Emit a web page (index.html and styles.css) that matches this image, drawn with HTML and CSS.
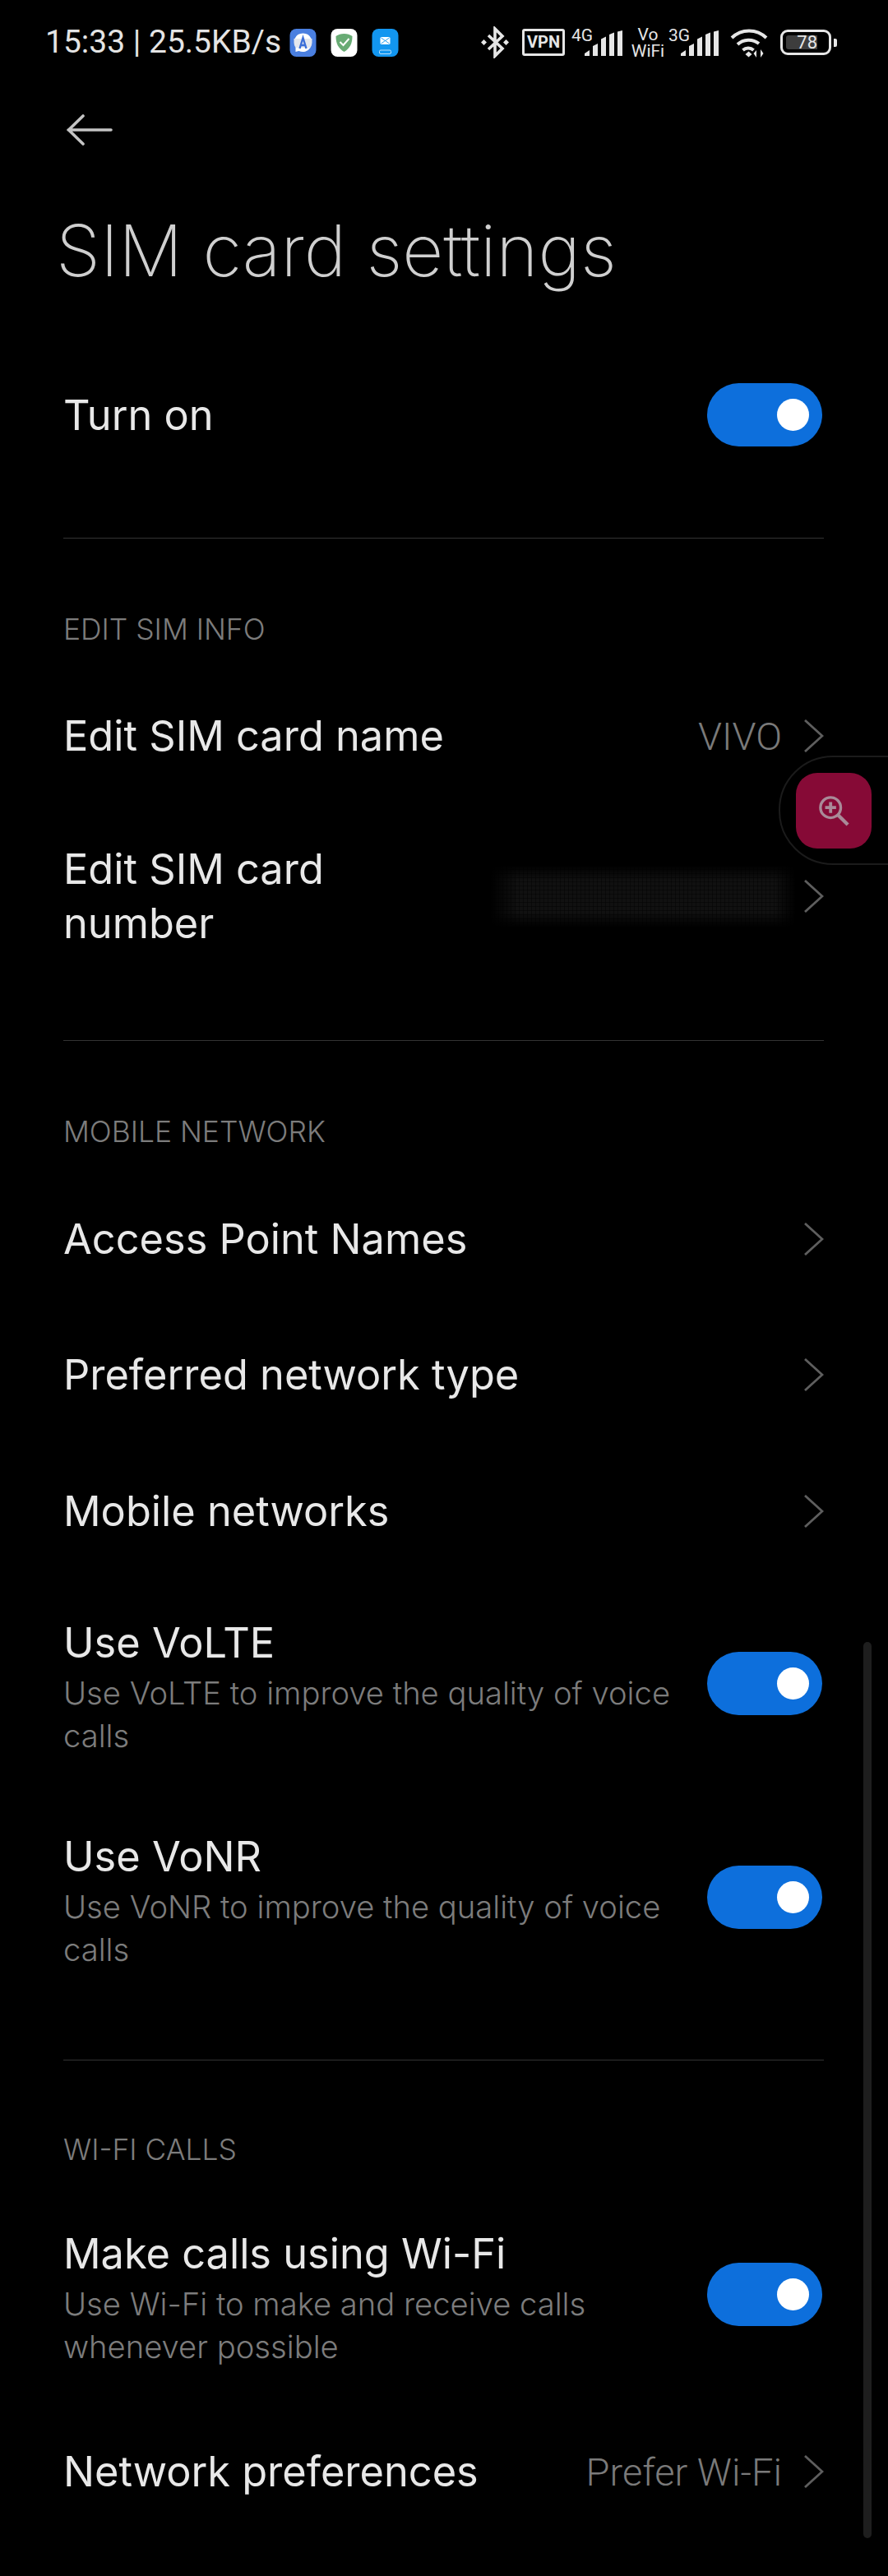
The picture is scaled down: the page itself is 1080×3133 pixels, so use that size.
FILE: index.html
```html
<!DOCTYPE html>
<html lang="en">
<head>
<meta charset="utf-8">
<title>SIM card settings</title>
<link rel="stylesheet" href="styles.css">
</head>
<body>
<div class="screen">
  <header class="status">
    <div class="status-left">
      <span class="clock">15:33 | 25.5KB/s</span>
      <span class="app-icons">
        <svg class="app" viewBox="0 0 32 34"><rect width="32" height="34" rx="8" fill="#4a7fe0"/><path d="M6 12a11 11 0 0 1 20 0z" fill="#fff"/><path d="M5 12h22v5a11 11 0 0 1-2 6H7a11 11 0 0 1-2-6z" fill="#e4e7ee"/><path d="M7 23h18a11 11 0 0 1-14 4l-4 1z" fill="#fff"/><path d="M12 24l4-13 4 13M13.5 20h5" stroke="#3c6fd8" stroke-width="2.4" fill="none"/></svg>
        <svg class="app" viewBox="0 0 32 34"><rect width="32" height="34" rx="8" fill="#fff"/><path d="M16 6c4 0 7 1 10 3 0 9-3 15-10 19C9 24 6 18 6 9c3-2 6-3 10-3z" fill="#68ab74"/><path d="M11 16l4 4 7-8" stroke="#fff" stroke-width="2" fill="none"/></svg>
        <svg class="app" viewBox="0 0 32 34"><rect width="32" height="34" rx="8" fill="#1296f0"/><rect x="10" y="10" width="12" height="9" rx="1.5" fill="#fff"/><path d="M11 11l10 7M21 11l-10 7" stroke="#1296f0" stroke-width=".9"/><rect x="9" y="26" width="14" height="4.500" rx="1.500" fill="none" stroke="#cfeafd" stroke-width=".9"/></svg>
      </span>
    </div>
    <div class="status-right">
      <svg class="bt" viewBox="0 0 34 39"><path d="M9 11l17 16-9 9V3l9 9L9 28" fill="none" stroke="#e6e6e6" stroke-width="3.600"/><path d="M0 19.500l3.500-3.500 3.500 3.500-3.500 3.500zM27 19.500l3.500-3.500 3.500 3.500-3.500 3.500z" fill="#e6e6e6"/></svg>
      <span class="vpn">VPN</span>
      <span class="signal">
        <span class="net">4G</span>
        <svg class="bars" viewBox="0 0 46 31"><path d="M0 31v-3l6-4v7zM10 31V19l6-3v15zM20 31V10.500l6-3V31zM30 31V5l6-2.500V31zM40 31V1.500L46 0v31z" fill="#e6e6e6"/></svg>
      </span>
      <span class="vowifi"><span>Vo</span><span>WiFi</span></span>
      <span class="signal">
        <span class="net">3G</span>
        <svg class="bars" viewBox="0 0 46 31"><path d="M0 31v-3l6-4v7zM10 31V19l6-3v15zM20 31V10.500l6-3V31zM30 31V5l6-2.500V31zM40 31V1.500L46 0v31z" fill="#e6e6e6"/></svg>
      </span>
      <svg class="wifi" viewBox="0 0 46 36"><path d="M2 12a30 30 0 0 1 42 0" fill="none" stroke="#e6e6e6" stroke-width="4"/><path d="M9 20a20 20 0 0 1 26-1" fill="none" stroke="#e6e6e6" stroke-width="4"/><path d="M15.500 27a10 10 0 0 1 13 0" fill="none" stroke="#e6e6e6" stroke-width="4"/><path d="M18.500 32l4-3.500 4 3.500-4 3.500z" fill="#e6e6e6"/><path d="M32 36v-9l-3.500 4zM37 26v10l3.500-5z" fill="#e6e6e6"/></svg>
      <span class="battery"><span class="battery-body"><span class="battery-level">78</span></span><span class="battery-nub"></span></span>
    </div>
  </header>

  <div class="toolbar">
    <svg class="back" viewBox="0 0 56 38"><path d="M2 19h52M20 2L2.500 19 20 36" fill="none" stroke="#c4c4c4" stroke-width="3.600" stroke-linecap="round" stroke-linejoin="round"/></svg>
  </div>
  <h1 class="title">SIM card settings</h1>

  <section class="group first">
    <div class="row single">
      <div class="row-text"><div class="row-title">Turn on</div></div>
      <span class="toggle"><span class="knob"></span></span>
    </div>
  </section>

  <section class="group tight">
    <h2 class="group-label">EDIT SIM INFO</h2>
    <div class="row single">
      <div class="row-text"><div class="row-title">Edit SIM card name</div></div>
      <span class="value">VIVO</span>
      <svg class="chev" viewBox="0 0 24 40"><path d="M1 1l21 19L1 39" fill="none" stroke="#5e5e5e" stroke-width="2.800"/></svg>
    </div>
    <div class="row number">
      <div class="row-text narrow"><div class="row-title">Edit SIM card number</div></div>
      <span class="redacted"></span>
      <svg class="chev" viewBox="0 0 24 40"><path d="M1 1l21 19L1 39" fill="none" stroke="#5e5e5e" stroke-width="2.800"/></svg>
    </div>
  </section>

  <section class="group mobile">
    <h2 class="group-label">MOBILE NETWORK</h2>
    <div class="row single">
      <div class="row-text"><div class="row-title">Access Point Names</div></div>
      <svg class="chev" viewBox="0 0 24 40"><path d="M1 1l21 19L1 39" fill="none" stroke="#5e5e5e" stroke-width="2.800"/></svg>
    </div>
    <div class="row single">
      <div class="row-text"><div class="row-title">Preferred network type</div></div>
      <svg class="chev" viewBox="0 0 24 40"><path d="M1 1l21 19L1 39" fill="none" stroke="#5e5e5e" stroke-width="2.800"/></svg>
    </div>
    <div class="row single">
      <div class="row-text"><div class="row-title">Mobile networks</div></div>
      <svg class="chev" viewBox="0 0 24 40"><path d="M1 1l21 19L1 39" fill="none" stroke="#5e5e5e" stroke-width="2.800"/></svg>
    </div>
    <div class="row double">
      <div class="row-text">
        <div class="row-title">Use VoLTE</div>
        <p class="row-sub">Use VoLTE to improve the quality of voice calls</p>
      </div>
      <span class="toggle"><span class="knob"></span></span>
    </div>
    <div class="row double">
      <div class="row-text">
        <div class="row-title">Use VoNR</div>
        <p class="row-sub">Use VoNR to improve the quality of voice calls</p>
      </div>
      <span class="toggle"><span class="knob"></span></span>
    </div>
  </section>

  <section class="group last">
    <h2 class="group-label">WI-FI CALLS</h2>
    <div class="row double">
      <div class="row-text">
        <div class="row-title">Make calls using Wi-Fi</div>
        <p class="row-sub">Use Wi-Fi to make and receive calls whenever possible</p>
      </div>
      <span class="toggle"><span class="knob"></span></span>
    </div>
    <div class="row single">
      <div class="row-text"><div class="row-title">Network preferences</div></div>
      <span class="value">Prefer Wi-Fi</span>
      <svg class="chev" viewBox="0 0 24 40"><path d="M1 1l21 19L1 39" fill="none" stroke="#5e5e5e" stroke-width="2.800"/></svg>
    </div>
  </section>

  <div class="scrollbar"></div>
  <div class="float-tab">
    <span class="float-btn">
      <svg viewBox="0 0 40 40"><circle cx="16" cy="16" r="13" fill="none" stroke="#a98a98" stroke-width="3.500"/><path d="M16 9v14M9 16h14" stroke="#a98a98" stroke-width="4"/><path d="M25 25l13 13" stroke="#a98a98" stroke-width="4.500"/></svg>
    </span>
  </div>
</div>
</body>
</html>
```
FILE: styles.css
```css
* { box-sizing: border-box; }
html, body { margin: 0; padding: 0; background: #000; }
.screen {
  position: relative;
  width: 1080px;
  height: 3133px;
  overflow: hidden;
  background: #000;
  color: #e6e6e6;
  font-family: Inter, "Noto Sans", sans-serif;
}

/* Status bar */
.status {
  height: 104px;
  padding: 32px 62px 0 55px;
  display: flex;
  justify-content: space-between;
  align-items: flex-start;
  font-family: Roboto, sans-serif;
}
.status-left { display: flex; align-items: center; height: 39px; }
.clock { font-size: 39px; line-height: 39px; color: #e4e4e4; white-space: nowrap; }
.app-icons { display: flex; gap: 17px; margin-left: 10px; }
.app { width: 33px; height: 34px; display: block; }
.status-right { display: flex; align-items: center; height: 39px; }
.bt { width: 36px; height: 39px; display: block; }
.vpn {
  width: 52px; height: 33px; margin-left: 15px;
  border: 3px solid #e6e6e6; border-radius: 3px;
  font-weight: 700; font-size: 20px; line-height: 27px; text-align: center; color: #e6e6e6;
}
.signal { position: relative; display: block; width: 63px; height: 39px; margin-left: 8px; }
.net { position: absolute; left: 0; top: 0; font-size: 21px; line-height: 22px; color: #e6e6e6; }
.bars { position: absolute; right: 0; bottom: 3px; width: 48px; height: 31px; display: block; }
.vowifi { display: flex; flex-direction: column; align-items: center; width: 42px; margin-left: 9px; font-size: 21px; line-height: 20px; }
.vowifi + .signal { margin-left: 4px; width: 62px; }
.wifi { width: 46px; height: 36px; margin-left: 13px; display: block; }
.battery { display: flex; align-items: center; margin-left: 15px; }
.battery-body {
  width: 62px; height: 31px; padding: 4px;
  border: 3px solid #e6e6e6; border-radius: 9px; display: block;
}
.battery-level {
  display: block; width: 38px; height: 17px; background: #3d3d3d; border-radius: 3px 0 0 3px;
  font-size: 22px; line-height: 17px; text-align: right; color: #e6e6e6;
}
.battery-nub { width: 4px; height: 10px; margin-left: 3px; background: #e6e6e6; border-radius: 0 2px 2px 0; }

/* Header */
.toolbar { height: 145px; padding: 35px 0 0 81px; }
.back { display: block; width: 56px; height: 38px; }
.title {
  margin: 0;
  padding: 0 0 0 68px;
  height: 110px;
  font-weight: 200;
  font-size: 86.800px;
  line-height: 112px;
  color: #cfcfcf;
  white-space: nowrap;
}

/* Groups */
.group { margin: 0 78px 0 77px; border-bottom: 1px solid #333; padding: 87px 0 66px; }
.group.first { padding: 0 0 66px; margin-top: 63px; }
.group.tight { padding-bottom: 63px; }
.group.mobile { padding-bottom: 64px; }
.group.last { border-bottom: 0; padding-top: 85px; padding-bottom: 0; }
.group-label { margin: 0 0 23px; font-weight: 300; font-size: 35.400px; line-height: 48px; color: #7c7c7c; }
.group.last .group-label { margin-bottom: 25px; }

/* Rows */
.row { display: flex; align-items: center; }
.row.single { height: 165.5px; }
.row.number { height: 224px; }
.row.double { height: 260px; }
.row.double .toggle { margin-bottom: 6px; }
.row-text { flex: 1; min-width: 0; }
.row-text.narrow { flex: none; width: 400px; }
.row-title { font-size: 50.500px; line-height: 66px; font-weight: 400; color: #e8e8e8; }
.row-sub { margin: 2px 0 0; width: 760px; font-size: 38.200px; line-height: 52px; font-weight: 300; color: #7c7c7c; }
.value { font-family: Roboto, sans-serif; font-size: 47px; font-weight: 300; color: #7a7a7a; margin-right: 27px; white-space: nowrap; }
.chev { width: 24px; height: 40px; flex: none; display: block; }
.redacted {
  width: 372px;
  height: 76px;
  margin: 0 10px 0 auto;
  background-color: #111;
  background-image:
    linear-gradient(90deg, rgba(0, 0, 0, .4) 0 1.500px, transparent 1.500px),
    linear-gradient(rgba(0, 0, 0, .4) 0 1.500px, transparent 1.500px);
  background-size: 5px 5px;
  -webkit-mask-image:
    linear-gradient(90deg, transparent, #000 9%, #000 93%, transparent),
    linear-gradient(transparent, #000 25%, #000 75%, transparent);
  mask-image:
    linear-gradient(90deg, transparent, #000 9%, #000 93%, transparent),
    linear-gradient(transparent, #000 25%, #000 75%, transparent);
  -webkit-mask-composite: source-in;
  mask-composite: intersect;
}

/* Toggle */
.toggle { flex: none; display: flex; justify-content: flex-end; align-items: center; width: 140px; height: 77px; margin-right: 2px; padding-right: 16px; background: #0d6fdc; border-radius: 39px; }
.knob { width: 39px; height: 39px; border-radius: 50%; background: #fff; }

/* Overlays */
.scrollbar { position: absolute; left: 1050px; top: 1997px; width: 10px; height: 1090px; background: #1e1e1e; border-radius: 5px; }
.float-tab {
  position: absolute; left: 947px; top: 919px; width: 150px; height: 133px;
  border: 2px solid #1b1b1b; border-radius: 66px 0 0 66px; background: #000;
  padding: 19px 0 0 19px;
}
.float-btn { display: flex; align-items: center; justify-content: center; width: 92px; height: 92px; border-radius: 26px; background: #860a36; }
.float-btn svg { width: 38px; height: 38px; display: block; }
```
